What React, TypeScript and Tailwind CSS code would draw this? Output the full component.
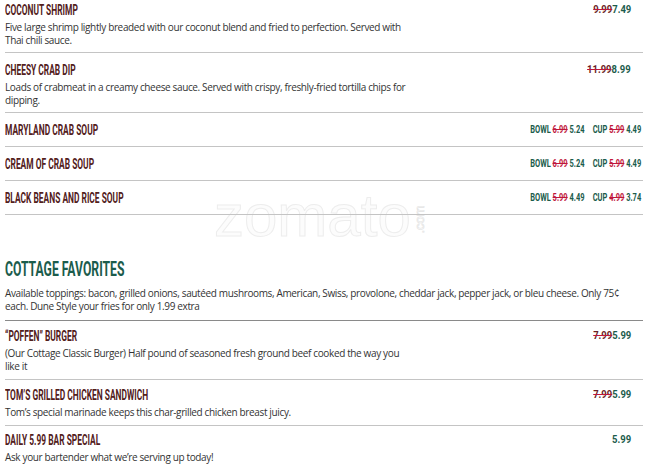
import React from "react";

const brown = "text-[#52201b]";
const cond = "font-['Roboto',sans-serif] font-bold";
const body = "font-['Open_Sans',sans-serif] text-[10px] leading-[13px] tracking-[-0.36px] text-[#333]";

function Title({ children }: { children: React.ReactNode }) {
  return (
    <span className={`${cond} ${brown} inline-block whitespace-nowrap origin-left scale-x-[0.6] text-[14px] leading-[16px] uppercase`}>
      {children}
    </span>
  );
}

function Price({ old, now }: { old?: string; now: string }) {
  return (
    <span className={`${cond} inline-block whitespace-nowrap origin-right scale-x-[0.86] text-[11px] leading-[16px] text-[#1b5c4c]`}>
      {old && <span className="line-through decoration-[#c0163b] text-[#6b1d24]">{old}</span>}
      {now}
    </span>
  );
}

function Item({
  title,
  desc,
  old,
  now,
  last,
  pt,
  pb,
  first,
}: {
  title: string;
  desc?: string;
  old?: string;
  now: string;
  last?: boolean;
  pt: string;
  pb: string;
  first?: boolean;
}) {
  return (
    <div className={`flex flex-col ${pt} ${pb} ${first ? "-mt-[7px]" : ""} ${last ? "" : "border-b border-[#c4c4c4]"}`}>
      <div className="flex items-center justify-between pr-[12px] h-[16px]">
        <Title>{title}</Title>
        <Price old={old} now={now} />
      </div>
      {desc && <p className={`${body} mt-[3px] max-w-[410px]`}>{desc}</p>}
    </div>
  );
}

function Soup({ title, bowl, cup }: { title: string; bowl: [string, string]; cup: [string, string] }) {
  return (
    <div className="flex items-center justify-between h-[34px] border-b border-[#c4c4c4] pr-[2px]">
      <Title>{title}</Title>
      <div className={`${cond} inline-flex origin-right scale-x-[0.68] whitespace-nowrap text-[11px] leading-[16px] text-[#1b5c4c] gap-[12px]`}>
        <span>
          BOWL <span className="line-through decoration-[#c0163b] text-[#c0163b]">{bowl[0]}</span> {bowl[1]}
        </span>
        <span>
          CUP <span className="line-through decoration-[#c0163b] text-[#c0163b]">{cup[0]}</span> {cup[1]}
        </span>
      </div>
    </div>
  );
}

export default function App() {
  return (
    <div className="relative w-[650px] h-[467px] bg-white overflow-hidden">
      <div className="pointer-events-none absolute left-[214px] top-[186px] flex items-center select-none">
        <span className="font-['Liberation_Sans',sans-serif] text-[60px] leading-[60px] text-[#fcfcfc] [-webkit-text-stroke:1px_#ededed]">zomato</span>
        <span className="font-['Liberation_Sans',sans-serif] text-[13px] leading-[13px] text-[#fcfcfc] [-webkit-text-stroke:0.6px_#e4e4e4] -rotate-90 -ml-[6px] mt-[6px]">.com</span>
      </div>
      <div className="relative flex flex-col pl-[5px] pr-[7px]">
        <Item first pt="pt-[9px]" pb="pb-[5px]" title="Coconut Shrimp" desc="Five large shrimp lightly breaded with our coconut blend and fried to perfection. Served with Thai chili sauce." old="9.99" now="7.49" />
        <Item pt="pt-[9px]" pb="pb-[5px]" title="Cheesy Crab Dip" desc="Loads of crabmeat in a creamy cheese sauce. Served with crispy, freshly-fried tortilla chips for dipping." old="11.99" now="8.99" />
        <Soup title="Maryland Crab Soup" bowl={["6.99", "5.24"]} cup={["5.99", "4.49"]} />
        <Soup title="Cream of Crab Soup" bowl={["6.99", "5.24"]} cup={["5.99", "4.49"]} />
        <Soup title="Black Beans and Rice Soup" bowl={["5.99", "4.49"]} cup={["4.99", "3.74"]} />
        <div className="mt-[42px] border-b border-[#8a8a8a] pb-[7px]">
          <h2 className={`${cond} inline-block whitespace-nowrap origin-left scale-x-[0.58] text-[#1b5c4c] text-[21px] leading-[24px] uppercase`}>Cottage Favorites</h2>
          <p className={`${body} mt-[5px] max-w-[625px]`}>
            Available toppings: bacon, grilled onions, sautéed mushrooms, American, Swiss, provolone, cheddar jack, pepper jack, or bleu cheese. Only 75¢ each. Dune Style your fries for only 1.99 extra
          </p>
        </div>
        <Item pt="pt-[7px]" pb="pb-[6px]" title="“Poffen” Burger" desc="(Our Cottage Classic Burger) Half pound of seasoned fresh ground beef cooked the way you like it" old="7.99" now="5.99" />
        <Item pt="pt-[7px]" pb="pb-[6px]" title="Tom’s Grilled Chicken Sandwich" desc="Tom’s special marinade keeps this char-grilled chicken breast juicy." old="7.99" now="5.99" />
        <Item pt="pt-[6px]" pb="pb-[6px]" title="Daily 5.99 Bar Special" desc="Ask your bartender what we’re serving up today!" now="5.99" last />
      </div>
    </div>
  );
}
